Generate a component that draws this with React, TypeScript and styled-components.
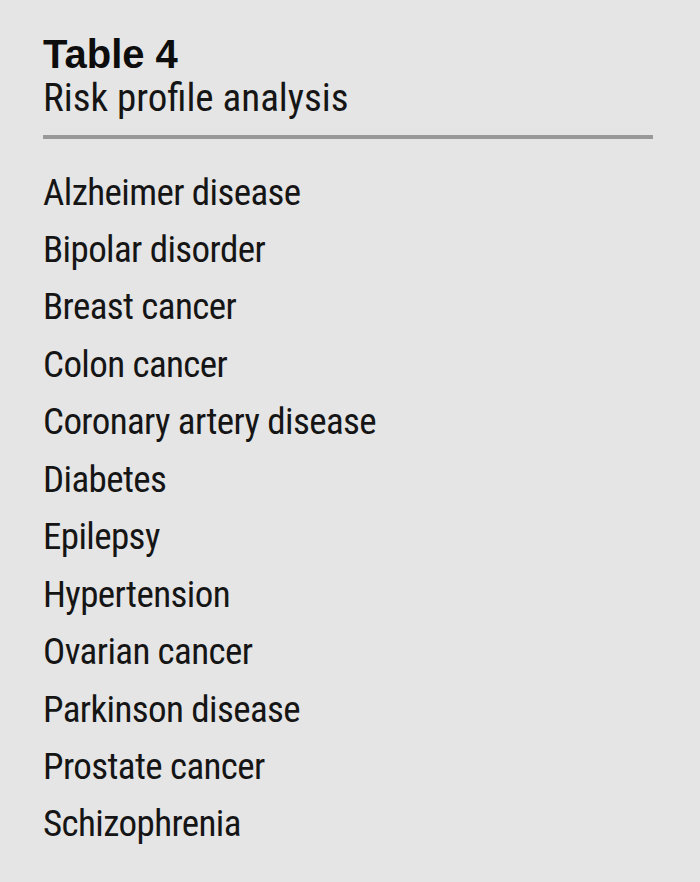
import React from "react";
import styled, { createGlobalStyle } from "styled-components";

const Global = createGlobalStyle`
  html, body { margin: 0; padding: 0; background: #e5e5e5; }
  body { font-family: Roboto, "Liberation Sans", Arial, sans-serif; color: #111; }
`;

const Page = styled.div`
  width: 700px;
  min-height: 882px;
  box-sizing: border-box;
  padding: 32px 47px 0 43px;
  background: #e5e5e5;
  display: flex;
  flex-direction: column;
`;

const Title = styled.h1`
  margin: 0;
  font-family: "Liberation Sans", Arial, sans-serif;
  font-weight: 700;
  font-size: 40px;
  line-height: 44px;
  color: #0d0d0d;
`;

const Subtitle = styled.h2`
  margin: 0;
  font-weight: 400;
  font-size: 39px;
  font-stretch: 75%;
  line-height: 44px;
  color: #151515;
`;

const Rule = styled.hr`
  margin: 14.5px 0 0;
  border: 0;
  height: 4px;
  background: #999;
  width: 610px;
`;

const List = styled.ul`
  list-style: none;
  margin: 25px 0 0;
  padding: 0;
  display: flex;
  flex-direction: column;
`;

const Item = styled.li`
  font-size: 37px;
  font-stretch: 75%;
  letter-spacing: -0.6px;
  line-height: 57.45px;
  color: #151515;
`;

const items = [
  "Alzheimer disease",
  "Bipolar disorder",
  "Breast cancer",
  "Colon cancer",
  "Coronary artery disease",
  "Diabetes",
  "Epilepsy",
  "Hypertension",
  "Ovarian cancer",
  "Parkinson disease",
  "Prostate cancer",
  "Schizophrenia",
];

export default function App() {
  return (
    <>
      <Global />
      <Page>
        <Title>Table 4</Title>
        <Subtitle>Risk profile analysis</Subtitle>
        <Rule />
        <List>
          {items.map((t) => (
            <Item key={t}>{t}</Item>
          ))}
        </List>
      </Page>
    </>
  );
}
